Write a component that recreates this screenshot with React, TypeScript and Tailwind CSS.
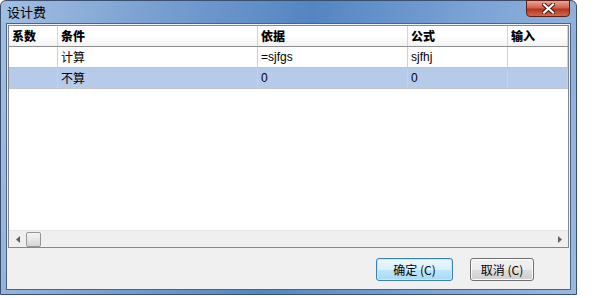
import React from 'react';

const cols = [
  { label: '系数', w: 'w-[49px]' },
  { label: '条件', w: 'w-[200px]' },
  { label: '依据', w: 'w-[150px]' },
  { label: '公式', w: 'w-[100px]' },
  { label: '输入', w: 'flex-1' },
];

const rows = [
  { cells: ['', '计算', '=sjfgs', 'sjfhj', ''], selected: false },
  { cells: ['', '不算', '0', '0', ''], selected: true },
];

const cjk = 'font-["SimSun","Noto_Sans_CJK_SC",sans-serif]';

export default function App() {
  return (
    <div className="w-[614px] h-[298px] bg-white relative overflow-hidden">
      {/* window frame */}
      <div className="w-[577px] h-[295px] flex flex-col rounded-t-[6px] border border-[#3b4f6e] bg-[linear-gradient(100deg,#a3bfe3_0%,#789fd0_25%,#5485c2_50%,#7aa2d4_75%,#98b9e0_100%)] px-[5px] pb-[4px]">
        {/* title bar */}
        <div className="h-[22px] flex items-start relative">
          <span className={`${cjk} text-[13px] text-black mt-[3px] ml-[1px] leading-[16px]`}>设计费</span>
          <div className="absolute right-[1px] top-[-1px] w-[44px] h-[17px] rounded-b-[4px] border border-[#5a1f1a] bg-[linear-gradient(180deg,#e8a797_0%,#d2614b_45%,#b8351d_55%,#cf6a4c_100%)] flex items-center justify-center">
            <svg width="13" height="11" viewBox="0 0 13 11">
              <path d="M2 1.5 L11 9.5 M11 1.5 L2 9.5" stroke="#3a1410" strokeWidth="4" strokeLinecap="square" />
              <path d="M2 1.5 L11 9.5 M11 1.5 L2 9.5" stroke="#ffffff" strokeWidth="2.2" strokeLinecap="square" />
            </svg>
          </div>
        </div>

        {/* client area */}
        <div className="flex-1 flex flex-col border border-[#4d6384] bg-[#f0f0f0]">
          {/* grid */}
          <div className="h-[223px] m-px flex flex-col border border-[#828790] bg-white">
            <div className="h-[21px] flex border-b border-[#8e8f8f] bg-[linear-gradient(180deg,#ffffff_0%,#ffffff_50%,#f3f3f3_100%)]">
              {cols.map((c, i) => (
                <div
                  key={i}
                  className={`${c.w} flex items-center pl-[3px] border-r border-[#d5d5d5] ${cjk} text-[12px] font-black text-black`}
                >
                  {c.label}
                </div>
              ))}
            </div>
            {rows.map((r, ri) => (
              <div
                key={ri}
                className={`h-[21px] flex border-b border-[#c4c4c4] ${r.selected ? 'bg-[#b5cbe9]' : 'bg-white'}`}
              >
                {r.cells.map((cell, ci) => (
                  <div
                    key={ci}
                    className={`${cols[ci].w} flex items-center pl-[3px] border-r border-[#d0d0d0] text-[12px] text-black ${
                      /[\u4e00-\u9fff]/.test(cell) ? cjk : 'font-["Tahoma","Liberation_Sans",sans-serif]'
                    }`}
                  >
                    {cell}
                  </div>
                ))}
              </div>
            ))}
            <div className="flex-1" />
            {/* horizontal scrollbar */}
            <div className="h-[17px] flex items-center bg-[#efefef] border-t border-[#e4e4e4]">
              <div className="w-[17px] h-full flex items-center justify-center">
                <svg width="4" height="7" viewBox="0 0 4 7">
                  <path d="M4 0 L0 3.5 L4 7 Z" fill="#606060" />
                </svg>
              </div>
              <div className="w-[15px] h-[15px] rounded-[2px] border border-[#959595] bg-[linear-gradient(180deg,#f4f4f4_0%,#e6e6e6_50%,#d6d6d6_100%)]" />
              <div className="flex-1" />
              <div className="w-[17px] h-full flex items-center justify-center">
                <svg width="4" height="7" viewBox="0 0 4 7">
                  <path d="M0 0 L4 3.5 L0 7 Z" fill="#606060" />
                </svg>
              </div>
            </div>
          </div>

          {/* button bar */}
          <div className="flex-1 flex items-center justify-end gap-[17px] pr-[36px] pt-[1px]">
            <button
              className={`w-[77px] h-[23px] rounded-[3px] border border-[#3c7fb1] bg-[linear-gradient(180deg,#eaf6fd_0%,#d9f0fc_50%,#bee6fd_51%,#a7d9f5_100%)] shadow-[inset_0_0_0_1px_#c6e8fa] ${cjk} text-[12px] text-black`}
            >
              确定 (C)
            </button>
            <button
              className={`w-[64px] h-[23px] rounded-[3px] border border-[#707070] bg-[linear-gradient(180deg,#f2f2f2_0%,#ebebeb_50%,#dddddd_51%,#cfcfcf_100%)] shadow-[inset_0_0_0_1px_#fbfbfb] ${cjk} text-[12px] text-black`}
            >
              取消 (C)
            </button>
          </div>
        </div>
      </div>
    </div>
  );
}
